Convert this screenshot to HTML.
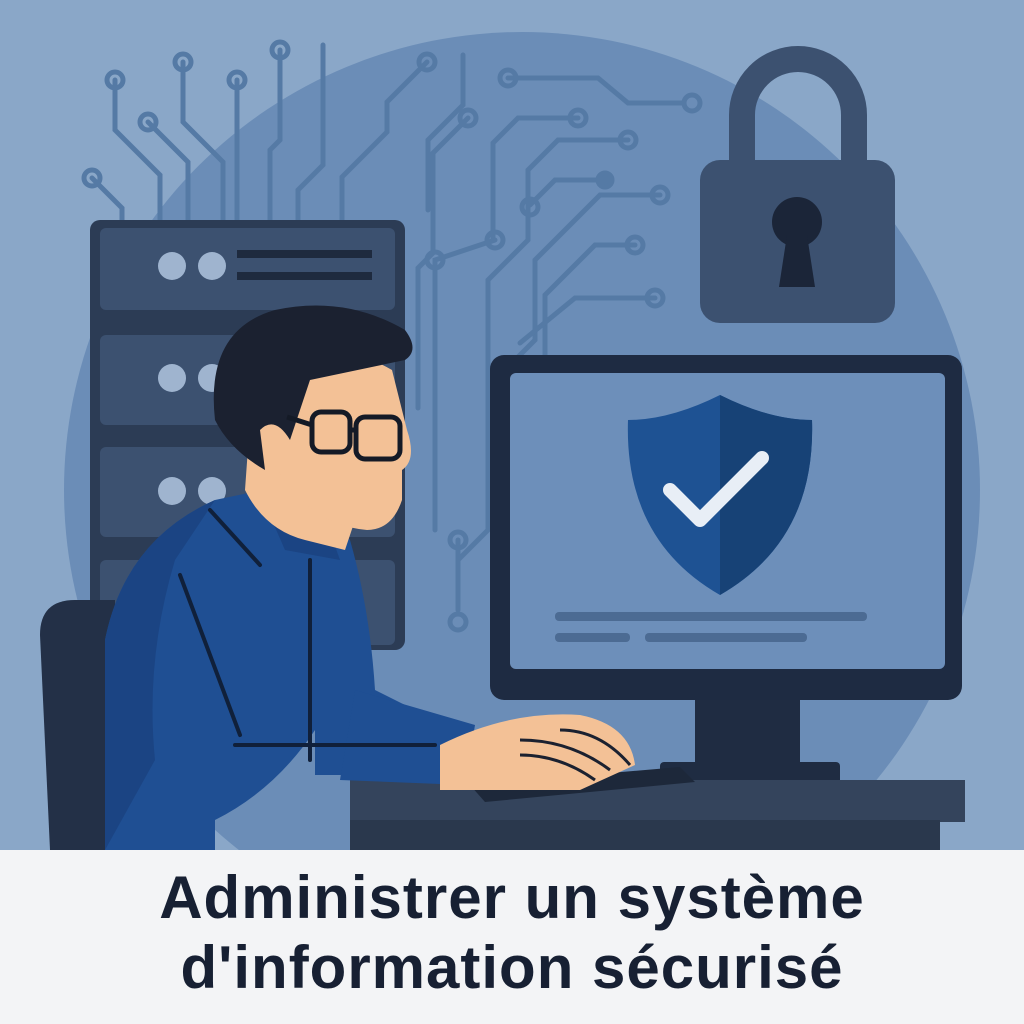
<!DOCTYPE html>
<html><head><meta charset="utf-8"><style>
html,body{margin:0;padding:0;width:1024px;height:1024px;overflow:hidden;background:#f3f4f6}
svg{display:block}
.t{position:absolute;left:0;width:1024px;text-align:center;font-family:"Liberation Sans",sans-serif;font-weight:bold;font-size:60px;line-height:60px;color:#172033;letter-spacing:1px}
</style></head><body>
<svg width="1024" height="850" viewBox="0 0 1024 850">
<rect width="1024" height="850" fill="#8aa7c8"/>
<circle cx="522" cy="490" r="458" fill="#6b8db7"/>
<g fill="none" stroke="#557aa5" stroke-width="5" stroke-linecap="round">
<path d="M115 80v50l45 45v45"/><circle cx="115" cy="80" r="8"/>
<path d="M183 62v60l40 40v58"/><circle cx="183" cy="62" r="8"/>
<path d="M237 80v140"/><circle cx="237" cy="80" r="8"/>
<path d="M280 50v90l-10 10v70"/><circle cx="280" cy="50" r="8"/>
<path d="M323 45v120l-25 25v30"/>
<path d="M148 122l40 40v58"/><circle cx="148" cy="122" r="8"/>
<path d="M92 178l30 30v12"/><circle cx="92" cy="178" r="8"/>
<path d="M427 62l-40 40v30l-45 45v45"/><circle cx="427" cy="62" r="8"/>
<path d="M463 55v50l-35 35v70"/>
<path d="M508 78h90l30 25h55"/><circle cx="508" cy="78" r="8"/><circle cx="692" cy="103" r="8"/>
<path d="M468 118l-35 35v100l-15 15v140"/><circle cx="468" cy="118" r="8"/>
<path d="M578 118h-60l-25 25v95"/><circle cx="578" cy="118" r="8"/>
<path d="M628 140h-70l-30 30v70l-40 40v250l-30 30v40"/><circle cx="628" cy="140" r="8"/>
<path d="M605 180h-50l-25 25"/><circle cx="605" cy="180" r="7" fill="#557aa5"/><circle cx="530" cy="207" r="8"/>
<path d="M660 195h-60l-65 65v80l-30 30v170"/><circle cx="660" cy="195" r="8"/>
<path d="M635 245h-40l-50 50v60"/><circle cx="635" cy="245" r="8"/>
<path d="M655 298h-80l-55 45"/><circle cx="655" cy="298" r="8"/>
<path d="M495 240l-60 20v270"/><circle cx="495" cy="240" r="8"/><circle cx="435" cy="260" r="8"/>
<path d="M458 540v70"/><circle cx="458" cy="540" r="8"/><circle cx="458" cy="622" r="8"/>
</g>
<path d="M742 170v-55a56 56 0 0 1 112 0v55" fill="none" stroke="#3c5170" stroke-width="26"/>
<rect x="700" y="160" width="195" height="163" rx="20" fill="#3c5170"/>
<circle cx="797" cy="222" r="25" fill="#1b2538"/><path d="M787 235h20l8 52h-36z" fill="#1b2538"/>
<rect x="90" y="220" width="315" height="430" rx="10" fill="#2c3c55"/>
<g fill="#3c5170"><rect x="100" y="228" width="295" height="82" rx="6"/><rect x="100" y="335" width="295" height="90" rx="6"/><rect x="100" y="447" width="295" height="90" rx="6"/><rect x="100" y="560" width="295" height="85" rx="6"/></g>
<g fill="#9fb4cf"><circle cx="172" cy="266" r="14"/><circle cx="212" cy="266" r="14"/><circle cx="172" cy="378" r="14"/><circle cx="212" cy="378" r="14"/><circle cx="172" cy="491" r="14"/><circle cx="212" cy="491" r="14"/></g>
<g fill="#1e2a3e"><rect x="237" y="250" width="135" height="8"/><rect x="237" y="272" width="135" height="8"/></g>
<rect x="695" y="690" width="105" height="85" fill="#1f2c42"/>
<rect x="660" y="762" width="180" height="22" rx="4" fill="#1f2c42"/>
<rect x="490" y="355" width="472" height="345" rx="14" fill="#1e2b42"/>
<rect x="510" y="373" width="435" height="296" rx="6" fill="#6d8fba"/>
<path d="M720 395q50 25 92 25q4 120 -92 175q-96 -55 -92 -175q42 0 92 -25z" fill="#1e5293"/>
<path d="M720 395q50 25 92 25q4 120 -92 175z" fill="#174276"/>
<path d="M670 490l30 30l62 -62" fill="none" stroke="#e8eef6" stroke-width="14" stroke-linecap="round" stroke-linejoin="round"/>
<g fill="#4c6b93"><rect x="555" y="612" width="312" height="9" rx="4"/><rect x="555" y="633" width="75" height="9" rx="4"/><rect x="645" y="633" width="162" height="9" rx="4"/></g>
<rect x="350" y="780" width="615" height="42" fill="#34445c"/>
<rect x="350" y="820" width="590" height="30" fill="#2a384d"/>
<path d="M470 785l210 -18l15 15l-210 20z" fill="#1d283a"/>
<path d="M40 635q0-35 35-35h40v250h-65z" fill="#233047"/>
<path d="M105 640q20-100 110-140l95 -20l40 60q20 70 25 150l80 40l-10 45h-130l0 -45q-40 60 -100 90v30h-110z" fill="#1f4f93"/>
<path d="M355 690l120 35l-10 60l-125 -5z" fill="#1f4f93"/>
<path d="M105 640q20-100 110-140l-40 60q-30 100 -20 200l-50 90z" fill="#1b4483"/>
<path d="M250 470l65 20l25 70l-55 -10z" fill="#1b4483"/>
<g fill="none" stroke="#10203a" stroke-width="4" stroke-linecap="round"><path d="M210 510l50 55"/><path d="M310 560v200"/><path d="M180 575q30 80 60 160"/><path d="M235 745h200"/></g>
<path d="M250 420l-5 70q20 40 60 50l40 10l10 -30l-40 -20z" fill="#f3c196"/>
<path d="M262 360q60 -30 130 10l15 60q10 30 -5 40l0 30q-10 30 -35 30q-60 -5 -95 -70z" fill="#f3c196"/>
<circle cx="262" cy="430" r="20" fill="#f3c196"/>
<path d="M215 420q-10 -90 60 -110q70 -15 130 20q15 20 0 30l-95 20q-10 30 -20 60q-15 -25 -30 -10l5 40q-35 -20 -50 -50z" fill="#1b2130"/>
<g fill="none" stroke="#141a26" stroke-width="5"><rect x="312" y="412" width="38" height="40" rx="9"/><rect x="356" y="417" width="44" height="42" rx="9"/><path d="M350 430h6M312 425l-25 -8"/></g>
<path d="M440 745q70 -35 140 -30q50 10 55 50l-55 25h-140z" fill="#f3c196"/>
<g fill="none" stroke="#1b2130" stroke-width="3"><path d="M520 740q50 0 90 30M520 755q40 0 75 25M560 730q40 0 70 35"/></g>
</svg>
<div class="t" style="top:868px">Administrer un système</div>
<div class="t" style="top:938px">d'information sécurisé</div>
</body></html>
